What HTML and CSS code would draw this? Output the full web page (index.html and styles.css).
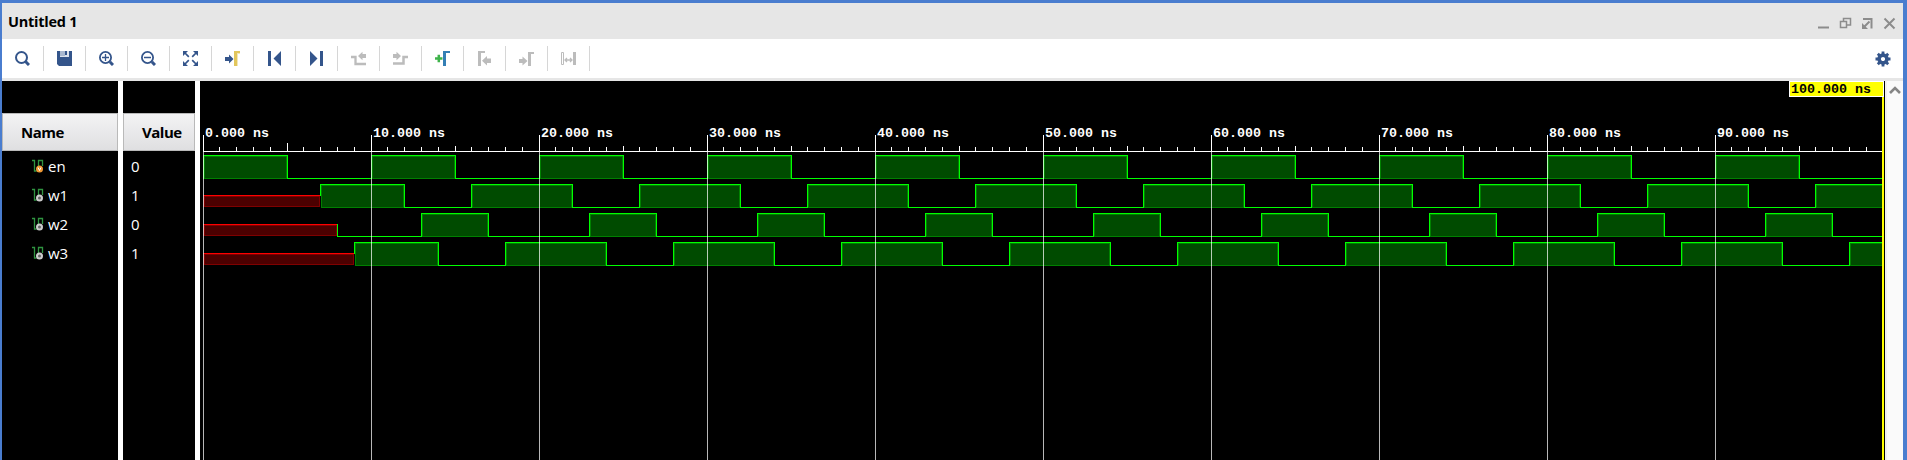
FILE: index.html
```html
<!DOCTYPE html>
<html lang="en">
<head>
<meta charset="utf-8">
<title>Untitled 1</title>
<link rel="stylesheet" href="styles.css">
</head>
<body>
<main class="window">
  <header class="titlebar">
    <h1 class="title">Untitled 1</h1>
    <svg class="controls" width="80" height="16" viewBox="0 0 80 16">
      <g fill="none" stroke="#8c8c8c" stroke-width="1.500">
        <path d="M1 12.500H12" stroke-width="2"/>
        <path d="M23.500 6.500h6v6h-6zM26.500 6V3.500h7v6.500H30"/>
        <path d="M46 4h8.500v9.500" stroke-width="2"/>
        <path d="M52.500 6.500l-5 5" stroke-width="2"/>
        <path d="M67.500 3.500l10 10M77.500 3.500l-10 10" stroke-width="2"/>
      </g>
      <path d="M45 8v6h6z" fill="#8c8c8c"/>
    </svg>
  </header>
  <nav class="toolbar">
    <span class="tool"><svg width="15" height="15"><circle cx="6.500" cy="6.500" r="5.500" fill="none" stroke="#34558b" stroke-width="2"/><path d="M10.500 10.500l3.500 3.500" stroke="#34558b" stroke-width="3"/></svg></span>
    <span class="tool"><svg width="15" height="15"><path d="M0 0h15v15H2l-2-2z" fill="#34558b"/><path d="M3 0h9v6H3z" fill="#dce2ec"/><path d="M3 0h5v5H3z" fill="#34558b" opacity=".3"/><path d="M8 0h2v4H8z" fill="#34558b"/></svg></span>
    <span class="tool"><svg width="15" height="15"><circle cx="6.500" cy="6.500" r="5.600" fill="none" stroke="#34558b" stroke-width="1.800"/><path d="M3 6.500h7M6.500 3v7" stroke="#34558b" stroke-width="1.300"/><path d="M10.800 10.800l3.200 3.200" stroke="#34558b" stroke-width="3"/></svg></span>
    <span class="tool"><svg width="15" height="15"><circle cx="6.500" cy="6.500" r="5.600" fill="none" stroke="#34558b" stroke-width="1.800"/><path d="M3 6.500h7" stroke="#34558b" stroke-width="1.500"/><path d="M10.800 10.800l3.200 3.200" stroke="#34558b" stroke-width="3"/></svg></span>
    <span class="tool"><svg width="15" height="15"><path d="M0 0h5L0 5zM15 0v5l-5-5zM0 15v-5l5 5zM15 15h-5l5-5z" fill="#34558b"/><path d="M2 2l3.800 3.800M13 2L9.200 5.800M2 13l3.800-3.800M13 13L9.200 9.200" stroke="#34558b" stroke-width="1.700"/></svg></span>
    <span class="tool"><svg width="15" height="15"><path d="M0 6h4V3.500L8.500 8 4 12.500V10H0z" fill="#34558b"/><path d="M9 0h6v3h-3v12H9z" fill="#e2c65c"/><path d="M12 2h3v1h-2v12h-1z" fill="#f2e6b8"/></svg></span>
    <span class="tool"><svg width="15" height="15"><path d="M1 0h3v15H1zM14 0v15L6.500 7.500z" fill="#34558b"/></svg></span>
    <span class="tool"><svg width="15" height="15"><path d="M11 0h3v15h-3zM1 0v15l7.500-7.500z" fill="#34558b"/></svg></span>
    <span class="tool"><svg width="15" height="15"><path d="M0 6h4.500v7H15" fill="none" stroke="#bcbcbc" stroke-width="2.300"/><path d="M15 3h-3.500V.800L7 5l4.500 4.200V7H15z" fill="#bcbcbc"/></svg></span>
    <span class="tool"><svg width="15" height="15"><path d="M0 12.500h10.500V6H15" fill="none" stroke="#bcbcbc" stroke-width="2.500"/><path d="M0 3h3.500V.800L8 5 3.500 9.200V7H0z" fill="#bcbcbc"/></svg></span>
    <span class="tool"><svg width="15" height="15"><path d="M0 7.500h7.500M3.800 3.700v7.600" stroke="#3eb34a" stroke-width="2.500"/><path d="M8 0h7v2h-4v13H8z" fill="#347fb5"/></svg></span>
    <span class="tool"><svg width="15" height="15"><path d="M1 0h7v2H4v13H1z" fill="#bcbcbc"/><path d="M14 7.500h-4V5L5 9.800l5 4.700V12h4z" fill="#bcbcbc"/></svg></span>
    <span class="tool"><svg width="15" height="15"><path d="M9 1h6v2h-3v12H9z" fill="#bcbcbc"/><path d="M0 8h3.500V5.500L8.500 10l-5 4.500V12H0z" fill="#bcbcbc"/></svg></span>
    <span class="tool"><svg width="15" height="15"><path d="M.500 1.500h2v12h-2z" fill="none" stroke="#bcbcbc"/><path d="M12 1h3v13h-3z" fill="#bcbcbc"/><path d="M4 9h7M6 7L4 9l2 2M9 7l2 2-2 2" fill="none" stroke="#bcbcbc" stroke-width="1.300"/></svg></span>
    <svg class="gear" width="16" height="16" viewBox="-8 -8 16 16">
      <circle r="3.900" fill="none" stroke="#34558b" stroke-width="3.600"/>
      <path d="M0-7.500v3M0 7.500v-3M-7.500 0h3M7.500 0h-3M-5.200-5.200l2 2M5.200-5.200l-2 2M-5.200 5.200l2-2M5.200 5.200l-2-2" stroke="#34558b" stroke-width="2.800"/>
    </svg>
  </nav>
  <section class="panes">
    <div class="column names">
      <div class="head">Name</div>
      <div class="row"><svg class="signal" width="12" height="15"><path d="M0 1.500h2.500V12H4.500M6.500 11V1.500h4V7" fill="none" stroke="#2f9440" stroke-width="1.300"/><circle cx="7.500" cy="10" r="3.500" fill="#f09a35"/><path d="M6 8.500l1.500 3 1.500-3" fill="none" stroke="#fff"/></svg><span>en</span></div>
      <div class="row"><svg class="signal" width="12" height="15"><path d="M0 1.500h2.500V12H4.500M6.500 11V1.500h4V7" fill="none" stroke="#2f9440" stroke-width="1.300"/><circle cx="7.500" cy="10" r="2.500" fill="#666" stroke="#ccc" stroke-width="2"/></svg><span>w1</span></div>
      <div class="row"><svg class="signal" width="12" height="15"><path d="M0 1.500h2.500V12H4.500M6.500 11V1.500h4V7" fill="none" stroke="#2f9440" stroke-width="1.300"/><circle cx="7.500" cy="10" r="2.500" fill="#666" stroke="#ccc" stroke-width="2"/></svg><span>w2</span></div>
      <div class="row"><svg class="signal" width="12" height="15"><path d="M0 1.500h2.500V12H4.500M6.500 11V1.500h4V7" fill="none" stroke="#2f9440" stroke-width="1.300"/><circle cx="7.500" cy="10" r="2.500" fill="#666" stroke="#ccc" stroke-width="2"/></svg><span>w3</span></div>
    </div>
    <div class="column values">
      <div class="head">Value</div>
      <div class="row">0</div>
      <div class="row">1</div>
      <div class="row">0</div>
      <div class="row">1</div>
    </div>
    <svg class="waves" id="waves" width="1685" height="379" viewBox="200 81 1685 379" shape-rendering="crispEdges"></svg>
    <div class="scrollbar"><svg width="12" height="8"><path d="M1 7l5-5 5 5" fill="none" stroke="#858585" stroke-width="2.600"/></svg></div>
  </section>
</main>
<script src="waves.js"></script>
</body>
</html>
```

FILE: styles.css
```css
* { box-sizing: border-box; }
body { margin: 0; background: #4a7fd0; font-family: "Open Sans", "Noto Sans", sans-serif; }
.window { height: 460px; display: flex; flex-direction: column; border: solid #4a7dcf; border-width: 3px 4px 0 2px; overflow: hidden; }
.titlebar { height: 36px; flex: none; display: flex; align-items: center; justify-content: space-between; padding: 0 6px 0 6px; background: #e6e6e6; }
.title { margin: 0; font-size: 14.5px; line-height: 20px; font-weight: 700; letter-spacing: -0.25px; color: #000; padding-top: 1px; }
.controls { margin-top: 4px; }
.toolbar { height: 42px; flex: none; display: flex; align-items: center; background: #fff; border-bottom: 3px solid #e6e6e6; }
.tool { width: 42px; height: 25px; display: flex; align-items: center; justify-content: center; border-right: 1px solid #d6d6d6; }
.gear { margin-left: auto; margin-right: 12px; }
.panes { flex: 1; display: flex; background: #fff; }
.column { background: #000; color: #fff; padding-top: 32px; margin-right: 5px; flex: none; }
.names { width: 116px; }
.values { width: 72px; }
.head { height: 38px; border: 1px solid #b9b9b9; background: linear-gradient(#f3f3f4, #dfdfe1); color: #000; font-size: 15px; font-weight: 700; letter-spacing: -0.5px; line-height: 37px; padding-left: 18px; margin-bottom: 1px; }
.row { height: 29px; display: flex; align-items: center; font-size: 15px; line-height: 29px; padding-left: 8px; }
.names .row { padding-left: 30px; }
.signal { margin-right: 4px; margin-top: -1px; flex: none; }
.waves { display: block; flex: none; background: #000; }
.tick-label { font: 700 13.333px "Liberation Mono", monospace; fill: #fff; }
.marker-label { fill: #000; }
.scrollbar { flex: 1; display: flex; justify-content: center; align-items: flex-start; padding-top: 5px; background: #fafafa; border-left: 2px solid #f0f0f0; }
```

FILE: waves.js
```js
const svg = document.getElementById('waves');
const START = 203, END = 1883, SCALE = 16.8;
const xAt = ns => Math.floor(START + ns * SCALE + 0.001);

function rect(x, y, w, h, fill) {
  const r = document.createElementNS('http://www.w3.org/2000/svg', 'rect');
  Object.entries({ x, y, width: w, height: h, fill }).forEach(([k, v]) => r.setAttribute(k, v));
  svg.appendChild(r);
}

function text(x, y, content, cls) {
  const t = document.createElementNS('http://www.w3.org/2000/svg', 'text');
  t.setAttribute('x', x);
  t.setAttribute('y', y);
  t.setAttribute('class', cls);
  t.textContent = content;
  svg.appendChild(t);
}

// Each signal: top pixel row, end of the undefined stretch, one-off spans,
// then the start and length in ns of the pulse that repeats every 10 ns
const signals = [
  { top: 155, undef: 0, once: [], first: 0, high: 5 },
  { top: 184, undef: 7, once: [[7, 12]], first: 16, high: 6 },
  { top: 213, undef: 8, once: [], first: 13, high: 4 },
  { top: 242, undef: 9, once: [[9, 14]], first: 18, high: 6 }
];

signals.forEach(s => {
  const spans = [...s.once];
  for (let t = s.first; t < 100; t += 10) spans.push([t, t + s.high]);
  rect(xAt(s.undef), s.top + 23, END - xAt(s.undef), 1, '#00ff00');
  if (s.undef) {
    const x = xAt(s.undef);
    rect(START, s.top + 11, x - START, 1, '#ff0000');
    rect(START, s.top + 12, x - START, 11, '#800000');
    rect(START + 2, s.top + 13, x - START - 3, 9, '#4b0000');
    if (!s.once.length) rect(x, s.top + 11, 1, 13, '#00ff00');
  }
  spans.forEach(([a, b]) => {
    const x = xAt(a), e = Math.min(xAt(b), END);
    rect(x, s.top, e - x + 1, 24, '#00ff00');
    rect(x + 1, s.top + 1, e - x - 1, 23, '#008000');
    rect(x + 2, s.top + 2, e - x - (b > 100 ? 2 : 3), 21, '#004b00');
    if (s.undef && a === s.undef) rect(x, s.top + 12, 1, 12, '#000');
  });
});

rect(START, 151, END - START, 1, '#fff');
for (let t = 0; t < 100; t++) {
  const x = xAt(t);
  const y = t % 10 === 0 ? 135 : t === 5 ? 143 : t % 5 === 0 ? 146 : 147;
  rect(x, y, 1, 151 - y, '#fff');
  if (t % 10 === 0) {
    rect(x, 152, 1, 308, 'rgba(255,255,255,.72)');
    text(x + 2, 137, t + '.000 ns', 'tick-label');
  }
}

// End-of-simulation marker
rect(1882, 97, 2, 363, '#ffff00');
rect(1789, 81, 95, 16, '#fff');
rect(1790, 82, 93, 14, '#ffff00');
text(1791, 93, '100.000 ns', 'tick-label marker-label');
```
